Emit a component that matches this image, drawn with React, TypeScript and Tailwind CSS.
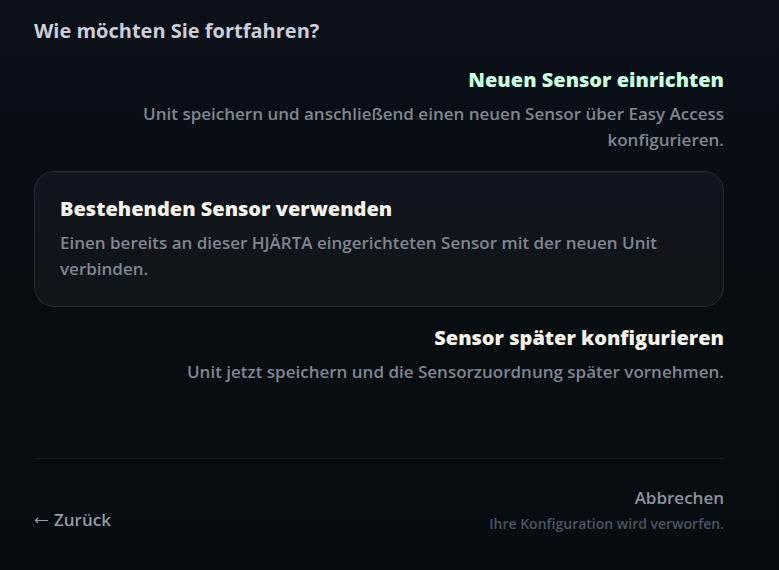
import { useState } from "react";
import clsx from "clsx";

type Option = {
  id: string;
  title: string;
  text: string;
};

const OPTIONS: Option[] = [
  {
    id: "new",
    title: "Neuen Sensor einrichten",
    text: "Unit speichern und anschließend einen neuen Sensor über Easy Access konfigurieren.",
  },
  {
    id: "existing",
    title: "Bestehenden Sensor verwenden",
    text: "Einen bereits an dieser HJÄRTA eingerichteten Sensor mit der neuen Unit verbinden.",
  },
  {
    id: "later",
    title: "Sensor später konfigurieren",
    text: "Unit jetzt speichern und die Sensorzuordnung später vornehmen.",
  },
];

function ArrowLeft() {
  return (
    <svg width="15" height="10" viewBox="0 0 15 10" fill="none" stroke="currentColor" aria-hidden="true">
      <path d="M1.5 5.5H14" />
      <path d="M4 3L1.5 5.5L4 8" strokeWidth="1.3" />
    </svg>
  );
}

export default function App() {
  const [selected, setSelected] = useState("existing");

  return (
    <div className="min-h-screen bg-linear-to-b from-[#0b1019] via-[#080d12] to-[#070c10] pt-[17px] pr-[55px] pb-8 pl-[34px] font-['Open_Sans','Noto_Sans',sans-serif] font-semibold text-[#7f8690]">
      <h1 className="text-[20px] leading-7 font-bold text-[#cbced9]">Wie möchten Sie fortfahren?</h1>

      <div className="mt-[22px] flex flex-col gap-[18px]">
        {OPTIONS.map((option) => {
          const active = option.id === selected;
          return (
            <button
              key={option.id}
              type="button"
              aria-pressed={active}
              onClick={() => setSelected(option.id)}
              className={clsx(
                "w-full cursor-pointer",
                active
                  ? "rounded-[20px] border border-[#272b34] bg-linear-to-b from-[#11151e] to-[#101518] px-[25px] py-6 text-left"
                  : "text-right"
              )}
            >
              <span
                className={clsx(
                  "block text-[20px] leading-[26px] font-extrabold",
                  option.id === "new" ? "text-[#c9ffdf]" : "text-[#f5f2e8]"
                )}
              >
                {option.title}
              </span>
              <span className="mt-2 block text-[17px] leading-[26px]">{option.text}</span>
            </button>
          );
        })}
      </div>

      <footer className="mt-[73px] flex items-end justify-between border-t border-[#14191f] pt-[26px]">
        <button
          type="button"
          className="mb-1 flex cursor-pointer items-center gap-[5px] text-[17px] leading-[26px] text-[#939aa6]"
        >
          <ArrowLeft />
          Zurück
        </button>
        <button type="button" className="cursor-pointer text-right">
          <span className="block text-[17px] leading-[26px] text-[#8b929e]">Abbrechen</span>
          <span className="block text-[14px] leading-[26px] text-[#4b5462]">Ihre Konfiguration wird verworfen.</span>
        </button>
      </footer>
    </div>
  );
}
